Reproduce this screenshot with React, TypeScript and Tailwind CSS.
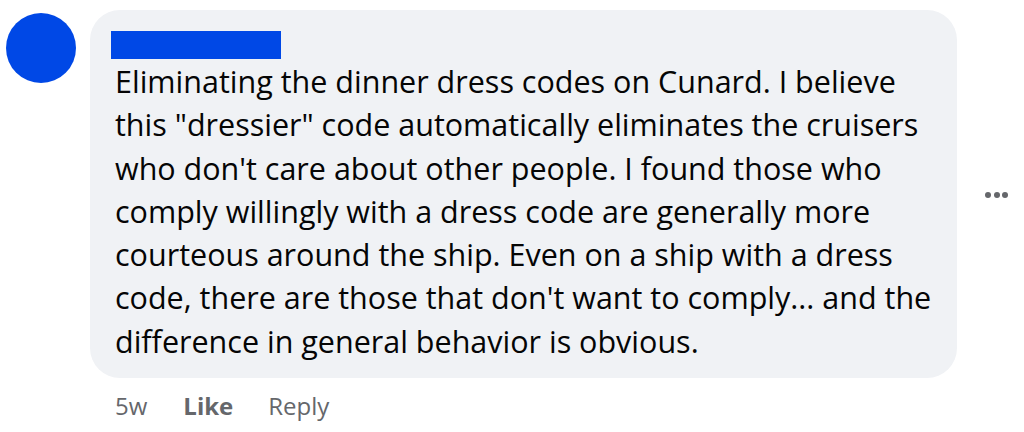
import React from 'react';

const LINES = [
  'Eliminating the dinner dress codes on Cunard. I believe',
  'this "dressier" code automatically eliminates the cruisers',
  "who don't care about other people. I found those who",
  'comply willingly with a dress code are generally more',
  'courteous around the ship. Even on a ship with a dress',
  "code, there are those that don't want to comply... and the",
  'difference in general behavior is obvious.',
];

export default function App() {
  return (
    <div
      className="w-[1024px] h-[432px] bg-white overflow-hidden flex"
      style={{ fontFamily: '"Open Sans", "Noto Sans", sans-serif' }}
    >
      {/* avatar */}
      <div className="pl-[6px] pt-[13px] w-[90px] shrink-0">
        <div className="w-[70px] h-[70px] rounded-full bg-[#0048e6]" />
      </div>

      <div className="flex flex-col pt-[10px]">
        <div className="flex items-center">
          {/* bubble */}
          <div className="w-[867px] h-[368px] rounded-[30px] bg-[#f0f2f5] pl-[21px] pt-[21px]">
            <div className="w-[170px] h-[28px] bg-[#0048e6]" />
            <div className="pl-[4px] mt-[1px] text-[30.5px] leading-[43.3px] text-[#050505]">
              {LINES.map((l, i) => (
                <div key={i} className="whitespace-nowrap">{l}</div>
              ))}
            </div>
          </div>
          {/* more */}
          <div className="ml-[28px] flex gap-[2.5px] pt-[2px]">
            <span className="w-[6px] h-[6px] rounded-full bg-[#65676b]" />
            <span className="w-[6px] h-[6px] rounded-full bg-[#65676b]" />
            <span className="w-[6px] h-[6px] rounded-full bg-[#65676b]" />
          </div>
        </div>

        <div className="flex items-center pl-[25px] mt-[12px] text-[24px] text-[#65676b] leading-[32px]">
          <span>5w</span>
          <span className="ml-[36px] font-bold">Like</span>
          <span className="ml-[35px]">Reply</span>
        </div>
      </div>
    </div>
  );
}
